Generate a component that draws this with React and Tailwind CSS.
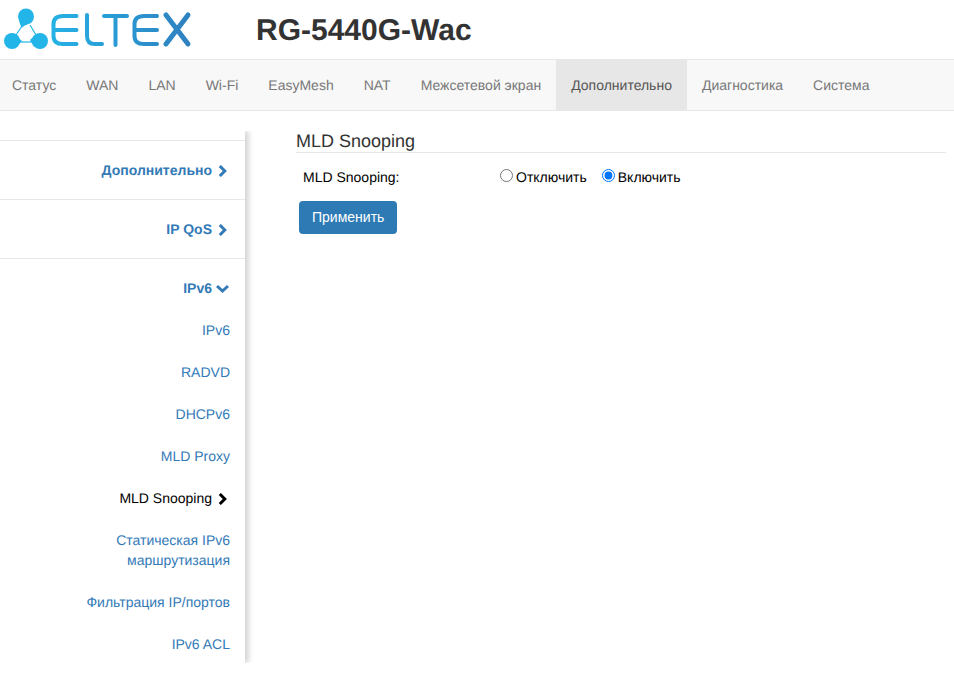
import React from 'react'

const tabs = ['Статус', 'WAN', 'LAN', 'Wi-Fi', 'EasyMesh', 'NAT', 'Межсетевой экран', 'Дополнительно', 'Диагностика', 'Система']

const subItems = ['IPv6', 'RADVD', 'DHCPv6', 'MLD Proxy', 'MLD Snooping', 'Статическая IPv6 маршрутизация', 'Фильтрация IP/портов', 'IPv6 ACL']

const Logo = () => (
	<svg width="192" height="52" viewBox="0 0 192 52" fill="none">
		<defs>
			<linearGradient id="eltexGrad" x1="50" y1="0" x2="192" y2="0" gradientUnits="userSpaceOnUse">
				<stop offset="0" stopColor="#25b2e6" />
				<stop offset="1" stopColor="#2f80bf" />
			</linearGradient>
		</defs>
		<g stroke="#23b5e8" strokeWidth="1.2">
			<path d="M22 26 L16 35" />
			<path d="M18 42 H34" />
			<path d="M30 25 L36 35" />
		</g>
		<g fill="#23b5e8">
			<circle cx="26" cy="16.5" r="8" />
			<path d="M19 21 L21.5 28 L24 26 L28 24 L31 22 Z" />
			<circle cx="12" cy="41" r="8" />
			<path d="M14 34 L22 41 L15 48.5 Z" />
			<circle cx="40" cy="41" r="8" />
			<path d="M36 34 L30 40 L34 47 Z" />
		</g>
		<g stroke="url(#eltexGrad)" strokeWidth="4" strokeLinecap="round" fill="none">
			<path d="M76.5 16 H63 Q53.5 16 53.5 24 V36 Q53.5 44 63 44 H76.5 M55 30 H76.5" />
			<path d="M87 15 V36 Q87 44 95 44 H102" />
			<path d="M104 16 H127 M115.5 16 V45" />
			<path d="M157 16 H144 Q134.5 16 134.5 24 V36 Q134.5 44 144 44 H157 M136 30 H157" />
			<path d="M166 15 L188 44 M188 15 L166 44" strokeWidth="5" />
		</g>
	</svg>
)

const ChevronRight = () => (
	<svg width="9" height="12" viewBox="0 0 9 12" fill="none" className="mt-[2px]">
		<path d="M1.8 1 L6.8 6 L1.8 11" stroke="currentColor" strokeWidth="3" />
	</svg>
)

const ChevronDown = () => (
	<svg width="13" height="9" viewBox="0 0 13 9" fill="none" className="mt-[1px]">
		<path d="M1 2 L6.5 7 L12 2" stroke="currentColor" strokeWidth="3" />
	</svg>
)

const App = () => {
	return (
		<div className="w-[954px] h-[678px] overflow-hidden bg-white font-['Liberation_Sans',Arial,sans-serif] text-sm text-[#333] [text-rendering:geometricPrecision]">
			<header className="h-[59px] flex items-center">
				<div className="w-[256px] self-start shrink-0">
					<Logo />
				</div>
				<h1 className="text-[30px] pt-[2px] font-bold text-[#333] leading-none">RG-5440G-Wac</h1>
			</header>
			<nav className="h-[52px] flex bg-[#f8f8f8] border-y border-[#e7e7e7]">
				{tabs.map((tab) => (
					<a
						key={tab}
						className={`px-[15px] leading-[50px] ${tab === 'Дополнительно' ? 'bg-[#e7e7e7] text-[#555]' : 'text-[#777]'} first:pl-3`}
					>
						{tab}
					</a>
				))}
			</nav>
			<div className="flex items-start">
				<aside className="w-[245px] h-[532px] mt-5 pt-[9px] shrink-0 shadow-[4px_0_5px_0_rgba(0,0,0,0.16)] [clip-path:inset(0_-10px_0_0)]">
					<div className="border-t border-[#e7e7e7]">
						<div className="h-[58px] flex items-center justify-end gap-[6px] pr-[18px] font-bold text-[#337ab7]">
							Дополнительно
							<ChevronRight />
						</div>
						<div className="h-[59px] flex items-center justify-end gap-[6px] pr-[18px] font-bold text-[#337ab7] border-t border-[#e7e7e7]">
							IP QoS
							<ChevronRight />
						</div>
						<div className="h-[59px] flex items-center justify-end gap-[4px] pr-4 font-bold text-[#337ab7] border-t border-[#e7e7e7]">
							IPv6
							<ChevronDown />
						</div>
						<ul className="-mt-[8px]">
							{subItems.map((item) =>
								item === 'MLD Snooping' ? (
									<li key={item} className="h-[42px] flex items-center justify-end gap-[6px] pr-[18px] text-black">
										{item}
										<ChevronRight />
									</li>
								) : (
									<li key={item} className="min-h-[42px] py-[11px] pr-[15px] text-right leading-5 text-[#337ab7] ml-auto max-w-[170px]">
										{item}
									</li>
								)
							)}
						</ul>
					</div>
				</aside>
				<main className="flex-1 ml-[51px] mr-2 mt-5">
					<h2 className="text-lg leading-5 text-[#333] border-b border-[#e7e7e7] h-[22px]">MLD Snooping</h2>
					<div className="flex items-center h-[48px] pl-[7px] text-black">
						<span className="w-[197px]">MLD Snooping:</span>
						<label className="flex items-center mr-[15px]">
							<input type="radio" name="mld" className="w-[13px] h-[13px] mr-[3px] -mt-[3px]" />
							Отключить
						</label>
						<label className="flex items-center">
							<input type="radio" name="mld" defaultChecked className="w-[13px] h-[13px] mr-[3px] -mt-[3px]" />
							Включить
						</label>
					</div>
					<button className="ml-[3px] h-[33px] px-[13px] pb-[1px] rounded bg-[#2d7ab4] text-white">Применить</button>
				</main>
			</div>
		</div>
	)
}

export default App
